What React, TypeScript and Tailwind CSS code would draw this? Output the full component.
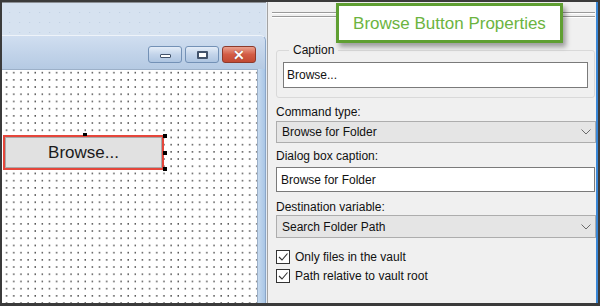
import type { ReactNode } from 'react'

function Dots({ id, color, w, h, x, y, size }: { id: string; color: string; w: number; h: number; x: number; y: number; size: number }) {
  return (
    <svg className="absolute inset-0 h-full w-full">
      <defs>
        <pattern id={id} width={w} height={h} patternUnits="userSpaceOnUse">
          <rect x={x} y={y} width={size} height={size} fill={color} />
        </pattern>
      </defs>
      <rect width="100%" height="100%" fill={`url(#${id})`} />
    </svg>
  )
}

function WinButton({ children, red }: { children: ReactNode; red?: boolean }) {
  return (
    <div
      className={
        red
          ? 'flex h-[17px] w-[34px] items-center justify-center rounded-[3px] border border-[#8d3a2c] bg-linear-to-b from-[#e9a08f] via-[#d35c45] to-[#c24a33]'
          : 'flex h-[17px] w-[34px] items-center justify-center rounded-[3px] border border-[#7391b6] bg-linear-to-b from-[#e4edf8] via-[#c3d4ea] to-[#aec5e1]'
      }
    >
      {children}
    </div>
  )
}

function Chevron() {
  return (
    <svg width="10" height="6" viewBox="0 0 10 6">
      <path d="M0.5 0.5 L5 5 L9.5 0.5" fill="none" stroke="#6a6a6a" strokeWidth="1" />
    </svg>
  )
}

function Check({ label }: { label: string }) {
  return (
    <div className="flex h-[14px] items-center gap-[5px]">
      <div className="flex h-[14px] w-[14px] items-center justify-center border border-[#333] bg-white">
        <svg width="12" height="12" viewBox="0 0 12 12">
          <path d="M2 6 L5 9 L10.5 2.5" fill="none" stroke="#333" strokeWidth="1.1" />
        </svg>
      </div>
      <span className="leading-[14px]">{label}</span>
    </div>
  )
}

export default function App() {
  return (
    <div className="flex h-[306px] w-[600px] bg-[#3b3b3b] pb-[3px] pl-[2px] pr-[2px] pt-[2px] font-['Liberation_Sans',Arial,sans-serif] text-[12px] text-[#111]">
      {/* designer canvas */}
      <div className="flex w-[264px] flex-col bg-[#d6e2f0]">
        <div className="relative h-[33px] border-t border-[#8c9096]">
          <Dots id="bgdots" color="#c2d1e4" w={10} h={10} x={7} y={9} size={1.2} />
        </div>
        <div className="flex flex-1 flex-col overflow-hidden rounded-tr-[6px] border-r border-t border-[#8aa6c8] border-t-[#eef3f9] bg-[#c2d5ea]">
          <div className="flex h-[33px] justify-end gap-[3px] bg-linear-to-b from-[#d0def0] to-[#b5cae3] pr-[9px] pt-[10px]">
            <WinButton>
              <div className="mt-[3px] h-[4px] w-[11px] rounded-[1px] border border-[#42536b] bg-white" />
            </WinButton>
            <WinButton>
              <div className="h-[8px] w-[11px] rounded-[1px] border-[2px] border-[#42536b] bg-white" />
            </WinButton>
            <WinButton red>
              <span className="text-[14px] font-bold leading-none text-white [text-shadow:0_0_1px_#5a1d12]">✕</span>
            </WinButton>
          </div>
          <div className="flex flex-1">
            <div className="relative flex-1 border-r border-t border-[#9cb0c8] bg-white">
              <Dots id="grid" color="#111" w={7.15} h={7.2} x={4} y={2} size={1.3} />
              <div className="relative ml-[1px] mt-[65px] h-[35px] w-[161px] border-[2px] border-[#e5463b]">
                <div className="flex h-full w-full items-center justify-center border border-[#a9a9a9] bg-[#e1e1e1] text-[17px] leading-none text-[#1b1b1b]">
                  Browse...
                </div>
                <div className="absolute -right-[5px] -top-[3px] h-[4px] w-[4px] bg-black" />
                <div className="absolute -right-[5px] top-[14px] h-[4px] w-[4px] bg-black" />
                <div className="absolute -right-[5px] -bottom-[3px] h-[4px] w-[4px] bg-black" />
                <div className="absolute -top-[4px] left-[78px] h-[3px] w-[4px] bg-black" />
              </div>
            </div>
            <div className="w-[7px] bg-linear-to-r from-[#c6daef] to-[#a9c6e6]" />
          </div>
        </div>
      </div>

      <div className="w-[1px] bg-[#e4ebf3]" />
      <div className="w-[1px] bg-[#a3a3a3]" />

      {/* properties panel */}
      <div className="relative flex flex-1 flex-col border-r-2 border-[#3a87d6] bg-[#f0f0f0]">
        <div className="ml-[4px] mr-[1px] mt-[10px] flex flex-col gap-[2px]">
          <div className="h-[2px] border-b border-t border-b-white border-t-[#9a9a9a]" />
          <div className="h-[2px] border-b border-t border-b-white border-t-[#9a9a9a]" />
        </div>

        <fieldset className="ml-[8px] mr-[1px] mt-[25px] rounded-[3px] border border-[#d9d9d9] px-[6px] pb-[9px]">
          <legend className="ml-[6px] px-[4px] leading-[14px]">Caption</legend>
          <div className="mt-[5px] flex h-[26px] items-center border border-[#7a7a7a] bg-white pl-[3px]">Browse...</div>
        </fieldset>

        <div className="ml-[8px] flex flex-col">
          <span className="mt-[7px] leading-[14px]">Command type:</span>
          <div className="mt-[2px] flex h-[22px] items-center justify-between border border-[#adadad] bg-[#e5e5e5] pl-[5px] pr-[4px]">
            <span>Browse for Folder</span>
            <Chevron />
          </div>
          <span className="mt-[6px] leading-[14px]">Dialog box caption:</span>
          <div className="mr-[1px] mt-[4px] flex h-[25px] items-center border border-[#7a7a7a] bg-white pl-[4px]">Browse for Folder</div>
          <span className="mt-[8px] leading-[14px]">Destination variable:</span>
          <div className="mt-[1px] flex h-[23px] items-center justify-between border border-[#adadad] bg-[#e5e5e5] pl-[5px] pr-[4px]">
            <span>Search Folder Path</span>
            <Chevron />
          </div>
          <div className="mt-[12px] flex flex-col gap-[5px]">
            <Check label="Only files in the vault" />
            <Check label="Path relative to vault root" />
          </div>
        </div>

        <div className="absolute left-[68px] top-[1px] flex h-[40px] w-[227px] items-center justify-center border-[3px] border-[#5f9f32] bg-white shadow-[3px_4px_5px_rgba(0,0,0,0.35)]">
          <span className="text-[17px] leading-none text-[#6cb43f]">Browse Button Properties</span>
        </div>
      </div>
    </div>
  )
}
